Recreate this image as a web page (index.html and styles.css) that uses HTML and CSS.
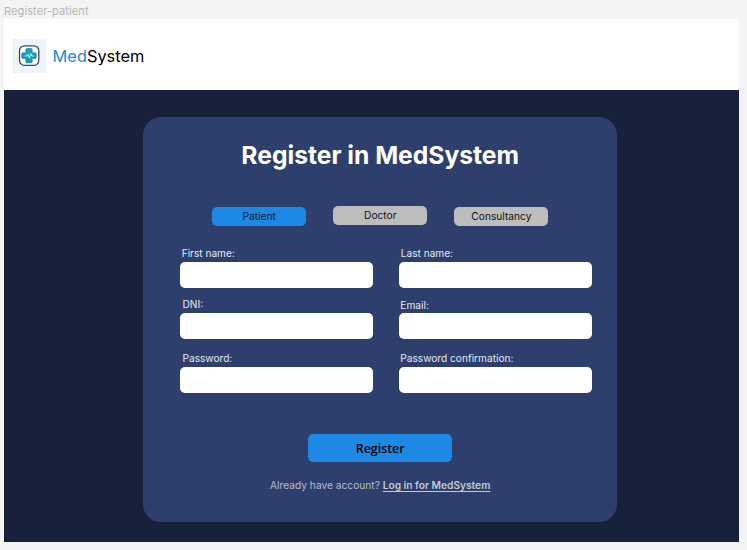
FILE: index.html
```html
<!DOCTYPE html>
<html lang="en">
<head>
<meta charset="utf-8">
<title>Register-patient</title>
<link rel="stylesheet" href="styles.css">
</head>
<body>
<div class="frame-name">Register-patient</div>
<div class="frame">
  <header class="header">
    <div class="logo">
      <svg width="34" height="34" viewBox="0 0 34 34" fill="none">
        <rect x="7.5" y="6.8" width="19.3" height="19.5" rx="4.8" fill="#fbfdfe" stroke="#3c4a58" stroke-width="1.3"/>
        <path d="M14.7 9.5h4.6q.9 0 .9.9v3.4h3.2q.9 0 .9.9v3.9q0 .9-.9.9h-3.2v3.3q0 .9-.9.9h-4.6q-.9 0-.9-.9v-3.3h-3.2q-.9 0-.9-.9v-3.9q0-.9.9-.9h3.2v-3.4q0-.9.9-.9z" fill="#1b9db3" stroke="#187f98" stroke-width=".6"/>
        <path d="M12.5 17h2.3l1.2-1.8 1.4 4 1.4-4.6 1.1 2.4h2" stroke="#e8fbff" stroke-width=".8" stroke-linejoin="round"/>
      </svg>
    </div>
    <div class="brand"><span class="brand-accent">Med</span>System</div>
  </header>
  <main class="main">
    <section class="card">
      <h1 class="title">Register in MedSystem</h1>
      <div class="tabs">
        <button class="tab tab-active">Patient</button>
        <button class="tab tab-raised">Doctor</button>
        <button class="tab">Consultancy</button>
      </div>
      <form class="form">
        <div class="column">
          <label class="field first"><span class="label">First name:</span><input class="input"></label>
          <label class="field dni"><span class="label">DNI:</span><input class="input"></label>
          <label class="field password"><span class="label">Password:</span><input class="input" type="password"></label>
        </div>
        <div class="column">
          <label class="field last"><span class="label">Last name:</span><input class="input"></label>
          <label class="field email"><span class="label">Email:</span><input class="input"></label>
          <label class="field confirm"><span class="label">Password confirmation:</span><input class="input" type="password"></label>
        </div>
      </form>
      <button class="submit">Register</button>
      <p class="login">Already have account? <a class="link">Log in for MedSystem</a></p>
    </section>
  </main>
</div>
</body>
</html>
```
FILE: styles.css
```css
* { box-sizing: border-box; }
body {
  margin: 0;
  height: 550px;
  overflow: hidden;
  background: #f4f4f4;
  font-family: Inter, "Liberation Sans", sans-serif;
}
.frame-name {
  height: 19px;
  padding: 4px 0 0 4px;
  font-size: 11px;
  line-height: 14px;
  letter-spacing: 0.1px;
  color: #b5b5b5;
}
.frame { width: 735.4px; margin-left: 4px; }
.header {
  display: flex;
  align-items: center;
  height: 71px;
  padding: 2px 0 0 8px;
  background: #fff;
}
.logo { width: 34px; height: 34px; background: #eff6fa; }
.logo svg { display: block; }
.brand {
  margin-left: 6.6px;
  font-size: 16.35px;
  line-height: 20px;
  color: #000;
}
.brand-accent { color: #1e88e5; }
.main {
  height: 452px;
  padding: 26.6px 0 0 139px;
  background: #17213c;
}
.card {
  width: 474.4px;
  height: 405.8px;
  padding-top: 22.4px;
  border-radius: 18px;
  background: #2f3f6d;
}
.title {
  margin: 0;
  font-size: 24.65px;
  line-height: 32px;
  font-weight: 700;
  text-align: center;
  color: #fff;
}
.tabs {
  display: flex;
  gap: 27.3px;
  margin: 36px 0 0 69.3px;
}
.tab {
  width: 93.8px;
  height: 18.7px;
  padding: 0;
  border: 0;
  border-radius: 5px;
  background: #bdbdbd;
  font: 400 10.2px/17px Inter, sans-serif;
  color: #111;
}
.tab-active { background: #1e88e5; color: #0a1a2e; }
.tab-raised { margin-top: -1px; }
.form {
  display: flex;
  gap: 25.4px;
  margin: 20.7px 0 0 36.7px;
}
.column { width: 193.7px; }
.field { display: flex; flex-direction: column; }
.label {
  padding-left: 2px;
  font-size: 10.15px;
  line-height: 13px;
  color: #e4e7ee;
}
.input {
  width: 100%;
  height: 26px;
  margin-top: 2.5px;
  padding: 0 8px;
  border: 0;
  border-radius: 5px;
  background: #fff;
}
.first, .last { padding-top: 0.6px; }
.first .input, .last .input { margin-top: 1.9px; }
.dni { margin-top: 10px; }
.dni .label, .password .label { padding-left: 2.8px; }
.email { margin-top: 11px; }
.email .label, .confirm .label { padding-left: 1.6px; }
.email .input { margin-top: 1.5px; }
.password { margin-top: 12.6px; }
.password .input { margin-top: 2.2px; }
.confirm { margin-top: 12.6px; }
.confirm .input { margin-top: 1.8px; }
.submit {
  display: block;
  width: 143.6px;
  height: 28.6px;
  margin: 40.6px 0 0 165.4px;
  padding: 1.2px 0 0;
  border: 0;
  border-radius: 5px;
  background: #1e88e5;
  font: 600 12.4px/27px "Open Sans", sans-serif;
  color: #000;
}
.login {
  margin: 16px 0 0;
  font-size: 10.2px;
  line-height: 14px;
  text-align: center;
  color: #b7bbc5;
}
.link {
  font-weight: 600;
  color: #c6c8ce;
  text-decoration: underline;
  text-underline-offset: 2px;
}
```
